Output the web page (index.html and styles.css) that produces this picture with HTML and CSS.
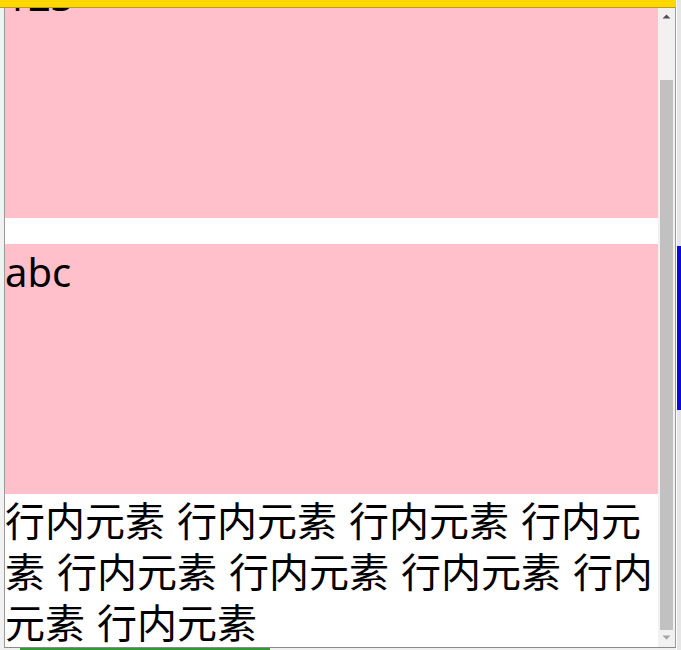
FILE: index.html
```html
<!DOCTYPE html>
<html lang="zh">
<head>
<meta charset="utf-8">
<title>行内元素</title>
<link rel="stylesheet" href="styles.css">
</head>
<body>
<div class="screen">
  <div class="main">
    <div class="topbar"></div>
    <div class="row">
      <div class="leftstrip"></div>
      <div class="window">
        <div class="viewport">
          <div class="box box-first">123</div>
          <div class="box box-second">abc</div>
          <p class="inline-text"><span>行内元素</span> <span>行内元素</span> <span>行内元素</span> <span>行内元素</span> <span>行内元素</span> <span>行内元素</span> <span>行内元素</span> <span>行内元素</span> <span>行内元素</span></p>
        </div>
        <div class="scrollbar">
          <div class="arrow">
            <svg width="17" height="17" viewBox="0 0 17 17"><polygon points="4.5,10.5 8.5,6.5 12.5,10.5" fill="#505050"/></svg>
          </div>
          <div class="track"><div class="thumb"></div></div>
          <div class="arrow">
            <svg width="17" height="17" viewBox="0 0 17 17"><polygon points="4.5,5.5 12.5,5.5 8.5,9.5" fill="#a3a3a3"/></svg>
          </div>
        </div>
      </div>
    </div>
    <div class="bottom"><div class="greenbar"></div></div>
  </div>
  <div class="rightstrip"><div class="bluebar"></div></div>
</div>
</body>
</html>
```
FILE: styles.css
```css
html, body {
  margin: 0;
  padding: 0;
}
body {
  background: #f0f0f0;
  overflow: hidden;
  font-family: "Noto Sans CJK SC", "Noto Sans", sans-serif;
}
.screen {
  display: flex;
  width: 681px;
  height: 650px;
}
.main {
  width: 676px;
  display: flex;
  flex-direction: column;
}
.topbar {
  height: 7px;
  background: #ffd700;
  border-bottom: 1px solid #b89c1a;
}
.row {
  display: flex;
  height: 640px;
}
.leftstrip {
  width: 4px;
  background: #f2f2f2;
}
.window {
  width: 670px;
  height: 639px;
  display: flex;
  border-left: 1px solid #9a9a9a;
  border-right: 1px solid #9a9a9a;
  border-bottom: 1px solid #8a8a8a;
  background: #fff;
}
.viewport {
  width: 653px;
  height: 639px;
  overflow: hidden;
  background: #fff;
  color: #000;
  font-size: 40px;
  line-height: 51px;
}
.box {
  height: 250px;
  box-sizing: border-box;
  padding-top: 2px;
  background: #ffc0cb;
  font-family: "Noto Sans", "Noto Sans CJK SC", sans-serif;
}
.box-first {
  margin-top: -40px;
}
.box-second {
  margin-top: 26px;
}
.inline-text {
  margin: 0;
  word-spacing: 3px;
}
.scrollbar {
  width: 17px;
  display: flex;
  flex-direction: column;
  background: #f1f1f1;
}
.arrow {
  height: 17px;
  display: flex;
}
.track {
  flex: 1;
  display: flex;
  flex-direction: column;
  padding: 55px 2px 0;
}
.thumb {
  flex: 1;
  background: #c1c1c1;
}
.bottom {
  height: 2px;
  padding-left: 20px;
  background: #f0f0f0;
}
.greenbar {
  width: 250px;
  height: 2px;
  background: #2e9b36;
}
.rightstrip {
  width: 4px;
  border-left: 1px solid #ffffff;
  background: #e6e6e6;
  padding-top: 246px;
}
.bluebar {
  height: 164px;
  background: #0a0ad0;
}
```
